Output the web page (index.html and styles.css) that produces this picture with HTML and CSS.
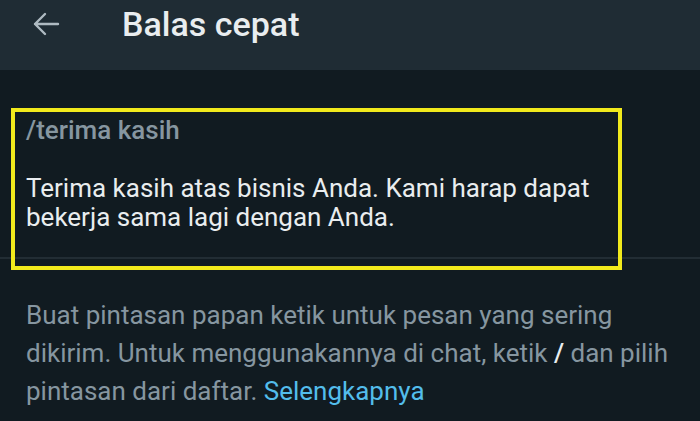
FILE: index.html
```html
<!DOCTYPE html>
<html lang="id">
<head>
    <meta charset="UTF-8">
    <meta name="viewport" content="width=device-width, initial-scale=1.0">
    <title>Balas cepat</title>
    <link rel="stylesheet" href="styles.css">
</head>
<body>
    <div class="topbar">
        <button class="back" aria-label="Kembali">
            <svg width="28" height="24" viewBox="0 0 28 24">
                <path d="M26 12H3M13 2L3 12l10 10" fill="none" stroke="#aebac1" stroke-width="2.4" stroke-linecap="round" stroke-linejoin="round"/>
            </svg>
        </button>
        <h1 class="title">Balas cepat</h1>
    </div>
    <div class="list">
        <div class="reply">
            <div class="shortcut">/terima kasih</div>
            <div class="message">Terima kasih atas bisnis Anda. Kami harap dapat bekerja sama lagi dengan Anda.</div>
            <div class="mark"></div>
        </div>
        <p class="info">Buat pintasan papan ketik untuk pesan yang sering dikirim. Untuk menggunakannya di chat, ketik <b>/</b> dan pilih pintasan dari daftar. <a href="#">Selengkapnya</a></p>
    </div>
</body>
</html>
```

FILE: styles.css
```css
* , *::after , *::before{
    box-sizing: border-box;
    margin: 0;
    padding: 0;
}
html , body {
    width: 100%;
    height: 100%;
}
body{
    background-color: #111b21;
    font-family: Roboto, "Liberation Sans", sans-serif;
    overflow: hidden;
}
.topbar{
    height: 70px;
    background-color: #1f2c34;
    display: flex;
    align-items: flex-start;
    padding-left: 32px;
}
.back{
    background: none;
    border: none;
    width: 28px;
    height: 24px;
    margin-top: 12px;
    display: flex;
}
.title{
    margin-left: 62px;
    margin-top: 4px;
    font-size: 34px;
    line-height: 40px;
    font-weight: 500;
    color: #e9edef;
}
.reply{
    position: relative;
    padding: 46px 26px 25px;
    border-bottom: 2px solid #222d34;
}
.shortcut{
    font-size: 26px;
    font-weight: 500;
    color: #8696a0;
    line-height: 28px;
}
.message{
    margin-top: 30px;
    width: 590px;
    font-size: 26px;
    line-height: 29px;
    color: #e9edef;
}
.mark{
    position: absolute;
    top: 38px;
    left: 11px;
    width: 611px;
    height: 162px;
    border: 4px solid #f2ea1c;
}
.info{
    padding: 37px 0 0 26px;
    width: 700px;
    font-size: 26px;
    line-height: 38px;
    color: #8696a0;
}
.info b{
    color: #e9edef;
    font-weight: 500;
}
.info a{
    color: #53bdeb;
    text-decoration: none;
}
```
